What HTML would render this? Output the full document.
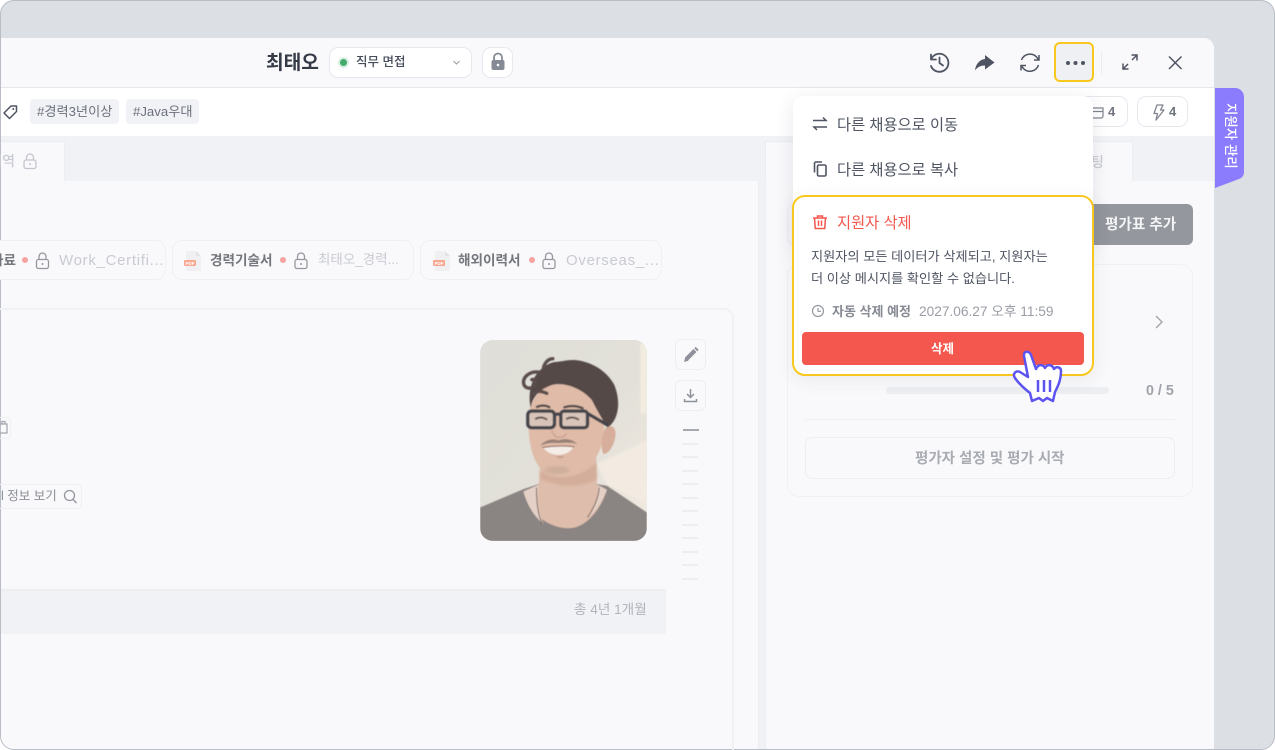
<!DOCTYPE html>
<html lang="ko"><head><meta charset="utf-8"><style>
*{box-sizing:border-box;margin:0;padding:0}
html,body{width:1275px;height:750px;overflow:hidden;background:#fff}
body{position:relative;font-family:"Liberation Sans","Noto Sans CJK KR",sans-serif;color:#4b5160}
.a{position:absolute}
.t{position:absolute;white-space:nowrap;line-height:1.2}
svg{position:absolute;overflow:visible}
.chip{position:absolute;top:240px;height:40px;border:1px solid #eff0f4;border-radius:10px;background:#f9f9fb}
.b{font-weight:700;color:#74777e;font-size:13.6px}
.g{color:#c9cbd2;font-size:14px}
.dot{position:absolute;width:6px;height:6px;border-radius:50%;background:#f6a3a0;top:257px}
.lk{fill:none;stroke:#94979e;stroke-width:1.3}
.sm{position:absolute;left:682px;width:16px;height:2px;background:#edeef1}
</style></head><body>
<div class="a" style="inset:0;background:#dcdfe4;border:1px solid #b9bdc6;border-radius:14px;overflow:hidden">
<div class="a" style="left:-1px;top:37px;width:1214px;height:712px;background:#f9f9fb;border-radius:0 10px 0 0;overflow:hidden;border-left:1px solid #c6ccd9">
</div></div>

<!-- header -->
<div class="a" style="left:1px;top:87px;width:1213px;height:1px;background:#e5e7ed"></div>
<div class="a" style="left:1px;top:88px;width:1213px;height:48px;background:#fff"></div>
<div class="a" style="left:1px;top:136px;width:1213px;height:45px;background:#f1f2f6"></div>
<div class="a" style="left:1px;top:141px;width:64px;height:40px;background:#f9f9fb;border-right:1px solid #ecedf1;border-top:1px solid #ecedf1"></div>
<div class="a" style="left:765px;top:141px;width:368px;height:40px;background:#f9f9fb;border:1px solid #ecedf1;border-bottom:0"></div>
<div class="a" style="left:759px;top:181px;width:6px;height:568px;background:#f1f2f6"></div>
<div class="a" style="left:758px;top:181px;width:1px;height:568px;background:#eceef2"></div>
<div class="a" style="left:765px;top:181px;width:1px;height:568px;background:#eceef2"></div>

<div class="t" style="left:266px;top:52px;font-size:19.2px;font-weight:700;color:#343a46">최태오</div>
<div class="a" style="left:329px;top:47px;width:143px;height:31px;background:#fff;border:1px solid #e6e8ee;border-radius:9px"></div>
<div class="a" style="left:338px;top:57px;width:11px;height:11px;border-radius:50%;background:#dcefe3"></div>
<div class="a" style="left:340px;top:59px;width:7px;height:7px;border-radius:50%;background:#45ab6c"></div>
<div class="t" style="left:356px;top:55px;font-size:12.5px;font-weight:500;color:#464c59">직무 면접</div>
<div class="a" style="left:482px;top:47px;width:31px;height:31px;background:#fff;border:1px solid #e6e8ee;border-radius:9px"></div>
<svg style="left:0;top:0" width="1275" height="750" viewBox="0 0 1275 750">
<path d="M453.500 61l3 3 3-3" fill="none" stroke="#9a9da6" stroke-width="1"/>
<path d="M494 60v-2.500a4 4 0 0 1 8 0V60" fill="none" stroke="#868a94" stroke-width="1.800"/>
<rect x="491.500" y="60" width="13" height="10" rx="2" fill="#868a94"/>
<circle cx="498" cy="65" r="1.300" fill="#fff"/>
<!-- history -->
<path d="M931.500 58.500A9 9 0 1 1 931 66" fill="none" stroke="#4e5462" stroke-width="1.800" stroke-linecap="round"/>
<path d="M931 54.500v5h5M939.500 57.500v5.500l3.500 2.500" fill="none" stroke="#4e5462" stroke-width="1.800" stroke-linecap="round" stroke-linejoin="round"/>
<!-- share -->
<path d="M985 55l9.500 7.500-9.500 7v-4c-4.500 0-7.500 1.500-10 5 .5-6 4.500-11 10-11.500z" fill="#4e5462"/>
<!-- refresh -->
<path d="M1021.500 60a9 9 0 0 1 15.500-2.500l1.500 2M1038.500 65a9 9 0 0 1-15.500 3l-1.500-2" fill="none" stroke="#4e5462" stroke-width="1.500"/>
<path d="M1039 55v5h-5M1021 70.500V65.500h5" fill="none" stroke="#4e5462" stroke-width="1.500"/>
<!-- expand -->
<path d="M1123 69l5-5M1132 60l5-5M1131.500 55h5.500v5.500M1123 63.500V69h5.500" fill="none" stroke="#4e5462" stroke-width="1.500"/>
<!-- close -->
<path d="M1169 56.500l12.500 12.500M1181.500 56.500L1169 69" fill="none" stroke="#4e5462" stroke-width="1.500"/>
</svg>
<div class="a" style="left:1054px;top:42px;width:40px;height:40px;background:#eff0f4;border:2px solid #f9c81e;border-radius:6px"></div>
<div class="a" style="left:1066px;top:61px;width:4px;height:4px;border-radius:50%;background:#4e5462;box-shadow:7.500px 0 #4e5462,15px 0 #4e5462"></div>
<div class="a" style="left:1101px;top:51px;width:1px;height:23px;background:#eaecf0"></div>

<!-- tags row -->
<svg style="left:0;top:0" width="20" height="130"><path d="M11 106h5.500v5.500l-7 7-5.500-5.500z" fill="none" stroke="#4e5462" stroke-width="1.500" stroke-linejoin="round"/><circle cx="13.300" cy="109" r="1" fill="#4e5462"/></svg>
<div class="a" style="left:30px;top:99px;width:89px;height:25px;background:#f1f2f6;border-radius:4px"></div>
<div class="a" style="left:126px;top:99px;width:73px;height:25px;background:#f1f2f6;border-radius:4px"></div>
<div class="t" style="left:37px;top:104px;font-size:13.200px;color:#6c717d">#경력3년이상</div>
<div class="t" style="left:133px;top:104px;font-size:13.200px;color:#6c717d">#Java우대</div>
<div class="a" style="left:1060px;top:96px;width:68px;height:31px;background:#fff;border:1px solid #e6e8ee;border-radius:9px"></div>
<div class="a" style="left:1137px;top:96px;width:51px;height:31px;background:#fff;border:1px solid #e6e8ee;border-radius:9px"></div>
<svg style="left:0;top:0" width="1275" height="140">
<path d="M1091 108h12v8a2 2 0 0 1-2 2h-8a2 2 0 0 1-2-2zM1091 111.500h12" fill="none" stroke="#80848e" stroke-width="1.200"/>
<path d="M1157 105h6l-2.500 5h3.500l-8 10 1.500-6.500h-3.500z" fill="none" stroke="#80848e" stroke-width="1.300" stroke-linejoin="round"/>
</svg>
<div class="t" style="left:1108px;top:104px;font-size:13px;font-weight:700;color:#70747f">4</div>
<div class="t" style="left:1169px;top:104px;font-size:13px;font-weight:700;color:#70747f">4</div>

<div class="t" style="left:0;top:153px;width:15px;overflow:hidden;font-size:14px;direction:rtl;color:#c9cbd2;font-weight:500">내역</div>
<svg style="left:0;top:0" width="60" height="180"><path d="M26.500 160v-2.500a3.500 3.500 0 0 1 7 0v2.500" fill="none" stroke="#c4c6cd" stroke-width="1.300"/><rect x="24" y="160" width="12" height="8.500" rx="2" fill="none" stroke="#c4c6cd" stroke-width="1.300"/><circle cx="30" cy="164" r="1" fill="#c4c6cd"/></svg>
<div class="t" style="left:1091px;top:154px;font-size:14px;font-weight:500;color:#c9cbd2;width:14px;overflow:hidden">팅</div>

<!-- file chips -->
<div class="chip" style="left:-40px;width:206px"></div>
<div class="chip" style="left:172px;width:242px"></div>
<div class="chip" style="left:420px;width:242px"></div>
<div class="t b" style="left:0;top:252.500px;width:16px;overflow:hidden;direction:rtl">자료</div>
<div class="dot" style="left:22px"></div>
<div class="t g" style="left:59px;top:251.500px;font-size:15px;letter-spacing:.7px">Work_Certifi...</div>
<svg style="left:0;top:0" width="680" height="290">
<g class="lk"><path d="M39 259.500v-3a3.500 3.500 0 0 1 7 0v3"/><rect x="36.500" y="259.500" width="12" height="9" rx="2"/></g><circle cx="42.500" cy="264" r="1" fill="#94979e"/>
<g class="lk"><path d="M297.500 259.500v-3a3.500 3.500 0 0 1 7 0v3"/><rect x="295" y="259.500" width="12" height="9" rx="2"/></g><circle cx="301" cy="264" r="1" fill="#94979e"/>
<g class="lk"><path d="M545.500 259.500v-3a3.500 3.500 0 0 1 7 0v3"/><rect x="543" y="259.500" width="12" height="9" rx="2"/></g><circle cx="549" cy="264" r="1" fill="#94979e"/>
<path d="M186 251h10l5 5v15h-15z" fill="#f0f0f2"/><path d="M196 251l5 5h-5z" fill="#e2e3e6"/>
<rect x="184" y="260" width="12" height="6" rx="1" fill="#f8a891"/>
<text x="190" y="265" font-size="4.500" font-weight="700" fill="#fff" text-anchor="middle">PDF</text>
<path d="M435 251h10l5 5v15h-15z" fill="#f0f0f2"/><path d="M445 251l5 5h-5z" fill="#e2e3e6"/>
<rect x="433" y="260" width="12" height="6" rx="1" fill="#f8a891"/>
<text x="439" y="265" font-size="4.500" font-weight="700" fill="#fff" text-anchor="middle">PDF</text>
</svg>
<div class="t b" style="left:210px;top:252.500px">경력기술서</div>
<div class="dot" style="left:280px"></div>
<div class="t g" style="left:318px;top:252px;font-size:13.500px">최태오_경력...</div>
<div class="t b" style="left:458px;top:252.500px">해외이력서</div>
<div class="dot" style="left:529px"></div>
<div class="t g" style="left:566px;top:251.500px;font-size:15px;letter-spacing:.7px">Overseas_...</div>

<!-- main card -->
<div class="a" style="left:-20px;top:308px;width:754px;height:460px;border:2px solid #f0f1f4;border-radius:10px"></div>

<!-- photo -->
<svg style="left:480px;top:339.500px" width="167" height="201.500" viewBox="60 28 500 604">
<defs>
<clipPath id="ph"><rect x="60" y="28" width="500" height="602" rx="38"/></clipPath>
<linearGradient id="bg" x1="0" y1="0" x2="1" y2="1"><stop offset="0" stop-color="#dfded8"/><stop offset=".55" stop-color="#e2e0d9"/><stop offset="1" stop-color="#f2eae1"/></linearGradient>
<filter id="bl"><feGaussianBlur stdDeviation="4"/></filter>
<filter id="bl2"><feGaussianBlur stdDeviation="1.500"/></filter>
</defs>
<g clip-path="url(#ph)"><rect x="60" y="28" width="500" height="604" fill="url(#bg)"/>
<path d="M410 400L560 330V520L440 460z" fill="#f3ebe2" filter="url(#bl)"/><rect x="540" y="40" width="20" height="210" fill="#f2ede0" filter="url(#bl)"/>
<g filter="url(#bl2)">
<path d="M60 530L190 475 235 460 410 460 440 465 560 545V632H60z" fill="#8a8482"/>
<path d="M190 482C210 560 280 595 330 592 380 590 425 530 440 477L410 462 408 370 240 400 236 462z" fill="#dfbdac"/>
<path d="M190 482l45-20c-5 40 0 80 15 118-30-25-50-60-60-98zM440 477l-26-14c0 35-15 75-35 100 30-20 48-55 61-86z" fill="#e4d0c6"/>
<path d="M240 420c40 30 120 25 168-25l2 50c-25 15-55 20-85 20-35 0-70-15-85-20z" fill="#d3ae9a" filter="url(#bl)"/>
<path d="M229 470c0 50 5 85 18 110M417 470c-2 35-18 65-35 90" fill="none" stroke="#776058" stroke-width="3"/>
<path d="M205 270C205 200 255 150 320 150 390 150 435 210 432 290 430 365 395 412 345 430 300 445 255 435 235 405 212 370 205 325 205 270z" fill="#dfbba8"/>
<path d="M436 292c14-14 32-4 30 20-3 30-18 56-36 58-10-15-6-58 6-78z" fill="#d6ae9b"/>
<ellipse cx="290" cy="418" rx="38" ry="12" fill="#b79c8b" opacity=".4" filter="url(#bl)"/>
<path d="M212 232C216 195 245 172 278 162 312 154 365 172 395 208 410 238 425 265 442 290 474 270 484 215 462 162 440 122 400 98 358 90 330 84 310 92 285 94 258 98 236 118 222 142 208 170 205 205 212 232z" fill="#544947"/>
<g fill="none" stroke="#5a4e4c" stroke-width="10" stroke-linecap="round">
<path d="M240 125c-25-5-48 8-50 28 0 20 20 25 33 12 9-12 1-22-8-18"/>
<path d="M250 112c2-14 14-28 28-28"/>
<path d="M222 188c12-10 28-5 38 0"/>
</g>
<path d="M240 345c18-20 40-22 55-16 15-6 38-6 56 10-18-4-36-4-56-2-20-2-38 0-55 8z" fill="#9a8175"/>
<path d="M250 352Q295 343 340 350 322 374 294 372 266 372 250 352z" fill="#f4ece7"/>
<path d="M247 350Q295 343 343 348" fill="none" stroke="#8a5f56" stroke-width="3"/>
<path d="M290 378q10 3 20 0" fill="none" stroke="#c59a88" stroke-width="5"/>
<path d="M275 300c5 12 12 20 20 20s20-2 25-12" fill="none" stroke="#cda693" stroke-width="5"/>
<rect x="203" y="241" width="80" height="50" rx="12" fill="#d8c4b8" stroke="#44454c" stroke-width="10"/>
<rect x="302" y="241" width="80" height="50" rx="10" fill="#d8c4b8" stroke="#44454c" stroke-width="10"/>
<path d="M283 253q10-6 19 0M382 248l62 36" fill="none" stroke="#44454c" stroke-width="10"/>
<path d="M225 265q18-10 36 2M318 265q18-10 38 2" fill="none" stroke="#63544f" stroke-width="6"/>
<path d="M228 230c14-8 30-7 42 1M310 231c18-8 42-6 60 3" fill="none" stroke="#564b49" stroke-width="7"/>
</g></g>
</svg>

<div class="a" style="left:675px;top:339px;width:31px;height:31px;border:1px solid #eceef1;border-radius:6px"></div>
<div class="a" style="left:675px;top:380px;width:31px;height:31px;border:1px solid #eceef1;border-radius:6px"></div>
<svg style="left:0;top:0" width="1275" height="750">
<path d="M684 362l1.200-4.500 3.300 3.300z" fill="#8e9199"/><path d="M686.500 359l8.500-8.500" stroke="#8e9199" stroke-width="4.200" fill="none"/><path d="M695.800 349.800l1.400-1.400" stroke="#8e9199" stroke-width="4.200" fill="none"/>
<path d="M690.500 389v8M687 394l3.500 3.500L694 394M684.500 399v2.500h12V399" fill="none" stroke="#8e9199" stroke-width="1.500"/>
<path d="M1156 316l6 6-6 6" fill="none" stroke="#a1a4ab" stroke-width="1.400"/>
</svg>
<div class="a" style="left:683px;top:429px;width:16px;height:2px;background:#a5a8af"></div>
<div class="sm" style="top:443px"></div><div class="sm" style="top:456px"></div><div class="sm" style="top:470px"></div><div class="sm" style="top:483px"></div><div class="sm" style="top:497px"></div><div class="sm" style="top:510px"></div><div class="sm" style="top:524px"></div><div class="sm" style="top:537px"></div><div class="sm" style="top:551px"></div><div class="sm" style="top:564px"></div><div class="sm" style="top:578px"></div>

<div class="a" style="left:-10px;top:417px;width:21px;height:22px;border:1px solid #eef0f3;border-radius:5px"></div>
<svg style="left:0;top:0" width="20" height="440"><path d="M0 424h7v9H0M2 424v-2.500h3V424" fill="none" stroke="#a3a6ad" stroke-width="1.200"/></svg>
<div class="a" style="left:-10px;top:484px;width:92px;height:25px;border:1px solid #eef0f3;border-radius:5px"></div>
<div class="t" style="left:1px;top:489px;font-size:12.500px;color:#8b8e96">l 정보 보기</div>
<svg style="left:0;top:0" width="90" height="510"><circle cx="69.500" cy="495.500" r="5" fill="none" stroke="#93969e" stroke-width="1.300"/><path d="M73 499.500l3.500 3.500" stroke="#93969e" stroke-width="1.300"/></svg>

<div class="a" style="left:1px;top:589px;width:665px;height:45px;background:#f1f2f6;border-top:2px solid #eceef2"></div>
<div class="t" style="left:574px;top:602px;font-size:13.600px;color:#b1b4bb">총 4년 1개월</div>

<!-- right column -->
<div class="a" style="left:787px;top:204px;width:310px;height:41px;border:1px solid #eff0f3;border-radius:8px"></div>
<div class="a" style="left:1080px;top:204px;width:113px;height:41px;background:#94979d;border-radius:6px"></div>
<div class="t" style="left:1105px;top:217px;font-size:14.600px;font-weight:700;color:#f3f4f5">평가표 추가</div>
<div class="a" style="left:787px;top:264px;width:406px;height:233px;border:1px solid #f0f1f4;border-radius:12px"></div>
<div class="a" style="left:886px;top:387px;width:223px;height:7px;border-radius:4px;background:#eceef1"></div>
<div class="t" style="left:1146px;top:383px;font-size:14.300px;font-weight:700;color:#a0a3aa">0 / 5</div>
<div class="a" style="left:805px;top:419px;width:370px;height:1px;background:#eceef1"></div>
<div class="a" style="left:805px;top:437px;width:370px;height:42px;border:1px solid #eceef1;border-radius:7px"></div>
<div class="t" style="left:915px;top:451px;font-size:14.500px;font-weight:700;color:#a8abb2">평가자 설정 및 평가 시작</div>

<!-- side tab -->
<svg style="left:1215px;top:88px" width="29" height="100"><path d="M0 0H20a9 9 0 0 1 9 9V84a7 7 0 0 1-5 7L0 100z" fill="#8b7bfd"/></svg>
<div class="t" style="left:1222px;top:103px;writing-mode:vertical-rl;text-orientation:sideways;font-size:13.500px;color:#fff;font-weight:500">지원자 관리</div>

<!-- menu -->
<div class="a" style="left:793px;top:96px;width:300px;height:150px;background:#fff;border-radius:10px 10px 0 0;box-shadow:0 4px 18px rgba(60,66,90,.12)"></div>
<div class="a" style="left:792px;top:195px;width:302px;height:181px;background:#fff;border:2px solid #f9c81e;border-radius:13px;box-shadow:0 4px 18px rgba(60,66,90,.08)"></div>
<svg style="left:0;top:0" width="1275" height="750">
<path d="M813 120.500h13l-3-3M827 127h-13l3 3" fill="none" stroke="#4e5462" stroke-width="1.500"/>
<rect x="817.500" y="165" width="8.500" height="11" rx="1.300" fill="none" stroke="#4e5462" stroke-width="1.600"/>
<path d="M814.500 172.500v-9a1.500 1.500 0 0 1 1.500-1.500h6" fill="none" stroke="#4e5462" stroke-width="1.600"/>
<path d="M813 218h14M817.500 218v-2h5v2M814.500 218l.8 10.500h9.400l.8-10.500M818.500 220.500v5.500M821.500 220.500v5.500" fill="none" stroke="#f4574d" stroke-width="1.500"/>
<circle cx="818" cy="311" r="5.500" fill="none" stroke="#94979f" stroke-width="1.200"/>
<path d="M818 308v3.300h3" fill="none" stroke="#94979f" stroke-width="1.200"/>
</svg>
<div class="t" style="left:837px;top:117px;font-size:15.300px;color:#4e5462">다른 채용으로 이동</div>
<div class="t" style="left:837px;top:162px;font-size:15.300px;color:#4e5462">다른 채용으로 복사</div>
<div class="t" style="left:837px;top:215px;font-size:15.300px;color:#f4574d">지원자 삭제</div>
<div class="t" style="left:811px;top:246px;font-size:13.200px;line-height:21.500px;color:#4e5462">지원자의 모든 데이터가 삭제되고, 지원자는<br>더 이상 메시지를 확인할 수 없습니다.</div>
<div class="t" style="left:832px;top:303.500px;font-size:13px;font-weight:700;color:#868a93">자동 삭제 예정</div>
<div class="t" style="left:919px;top:303.500px;font-size:13.700px;color:#9a9da5">2027.06.27 오후 11:59</div>
<div class="a" style="left:802px;top:332px;width:282px;height:33px;background:#f4574d;border-radius:4px"></div>
<div class="t" style="left:931px;top:342px;font-size:12.500px;font-weight:700;color:#fff">삭제</div>

<!-- hand cursor -->
<svg style="left:0;top:0" width="1275" height="750">
<path d="M1024 356C1023 351 1029 350 1031 355L1036 369C1038 364 1043 364 1045 368 1047 364 1052 364 1054 369 1056 366 1061 367 1061 371 1061 380 1058 386 1055 392L1053 401 1047 398 1043 401 1039 398 1032 401 1030 393C1025 389 1019 384 1015 378 1012 374 1016 370 1020 372L1028 377z" fill="#fff" stroke="#5c53f0" stroke-width="2.500" stroke-linejoin="round"/>
<path d="M1038 380v12M1044 380v12M1050 380v12" stroke="#5c53f0" stroke-width="2.500" fill="none"/>
</svg>
</body></html>
